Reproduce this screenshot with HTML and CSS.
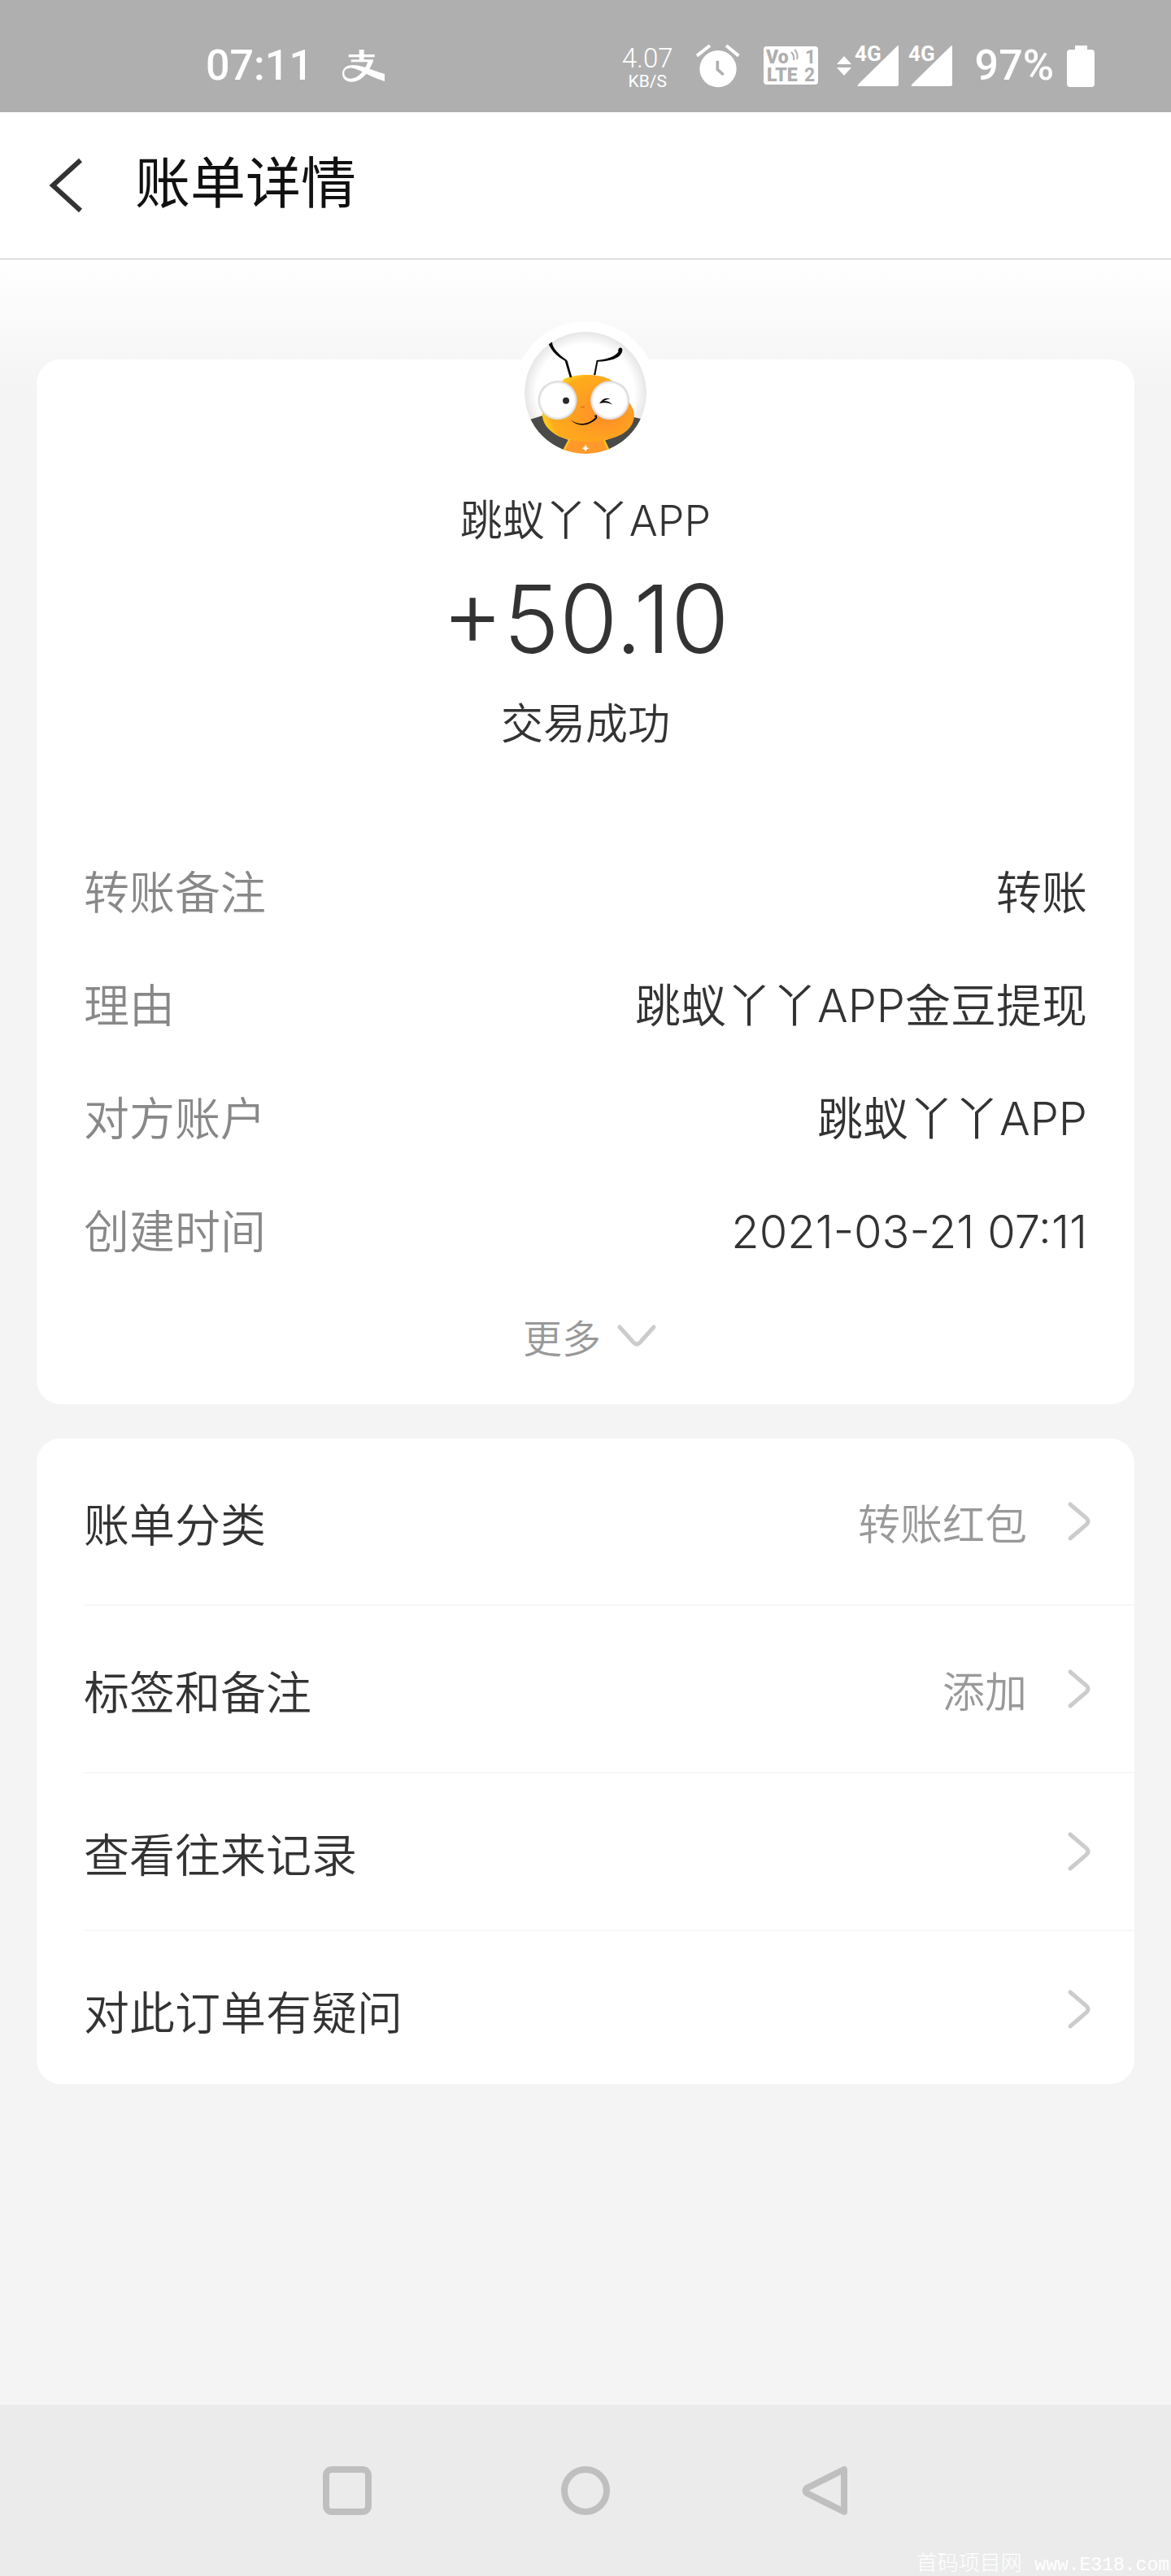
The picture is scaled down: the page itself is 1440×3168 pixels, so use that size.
FILE: index.html
```html
<!DOCTYPE html>
<html lang="zh-CN">
<head>
<meta charset="utf-8">
<meta name="viewport" content="width=device-width">
<title>账单详情</title>
<link rel="stylesheet" href="styles.css">
</head>
<body>
<div class="status-bar">
  <div class="status-left">
    <span class="status-text">07:11</span>
    <svg class="pay-icon" width="52" height="42" viewBox="598 94 156 126" aria-hidden="true">
      <g fill="#fff">
        <path d="M660 97h18v43h-18zM621 115h96v10h-96zM630 134h82v9h-82z"/>
        <path d="M694 137h18c-8 26-22 48-38 62-16 14-30 17-42 17-20 0-34-13-34-30 0-20 16-32 38-32 30 0 58 14 118 33v27c-40-13-66-26-88-38-18-8-30-12-42-11-13 1-19 9-19 19 0 12 9 20 24 20 30 0 54-34 65-67z"/>
      </g>
    </svg>
  </div>
  <div class="status-right">
    <div class="net-speed"><span class="net-value">4.07</span><span class="net-unit">KB/S</span></div>
    <svg class="alarm-icon" width="54" height="54" viewBox="346 76 162 162" aria-hidden="true">
      <circle cx="427" cy="168" r="68" fill="#fff"/>
      <path d="M349 120l48-38M457 82l46 38" stroke="#fff" stroke-width="12"/>
      <path d="M425 138v32l22 20" fill="none" stroke="#afafaf" stroke-width="11"/>
    </svg>
    <svg class="volte-icon" width="68" height="48" viewBox="0 0 68 48" aria-hidden="true">
      <rect width="67" height="47" rx="4" fill="#fff"/>
      <g class="volte-text">
        <text x="3" y="21">Vo</text><text x="4" y="43">LTE</text>
        <text class="volte-num" x="51" y="21">1</text><text class="volte-num" x="50" y="43">2</text>
      </g>
      <path d="M34 7q4 4 3 10M38 4q5 5 3 12" fill="none" stroke="#afafaf" stroke-width="2"/>
    </svg>
    <svg class="data-icon" width="18" height="24" viewBox="0 0 18 24" aria-hidden="true"><path d="M9 0l9 10H0zM0 14h18l-9 10z" fill="#fff"/></svg>
    <svg class="signal-icon" width="56" height="50" viewBox="0 0 56 50" aria-hidden="true"><path d="M54 1v47q0 2-2 2H5q-2 0-1-2L52 1q2-2 2 0z" fill="#fff"/><text x="0" y="19">4G</text></svg>
    <svg class="signal-icon" width="56" height="50" viewBox="0 0 56 50" aria-hidden="true"><path d="M54 1v47q0 2-2 2H5q-2 0-1-2L52 1q2-2 2 0z" fill="#fff"/><text x="0" y="19">4G</text></svg>
    <span class="status-text battery-level">97%</span>
    <svg class="battery-icon" width="34" height="51" viewBox="0 0 34 51" aria-hidden="true"><path d="M10 0h15v5h5q4 0 4 4v38q0 4-4 4H4q-4 0-4-4V9q0-4 4-4h6z" fill="#fff"/></svg>
  </div>
</div>

<header class="title-bar">
  <button class="back" type="button" aria-label="返回">
    <svg width="40" height="66" viewBox="0 0 40 66" aria-hidden="true"><path d="M37 2L3 33l34 31" fill="none" stroke="#333" stroke-width="6"/></svg>
  </button>
  <h1 class="title">账单详情</h1>
</header>

<main class="content">
  <section class="card bill">
    <div class="avatar">
      <svg width="150" height="150" viewBox="135 83 450 450" aria-hidden="true">
        <defs>
          <clipPath id="face"><circle cx="360" cy="308" r="225"/></clipPath>
          <radialGradient id="bg"><stop offset=".8" stop-color="#fff"/><stop offset="1" stop-color="#e6e6e6"/></radialGradient>
          <radialGradient id="eye"><stop offset=".84" stop-color="#fff"/><stop offset="1" stop-color="#d2d0ce"/></radialGradient>
          <radialGradient id="skin" cx=".68" cy=".58" r=".65"><stop offset="0" stop-color="#ff8b2b"/><stop offset=".6" stop-color="#ffa31f"/><stop offset=".9" stop-color="#ffab1c"/><stop offset="1" stop-color="#ffc81e"/></radialGradient>
        </defs>
        <g clip-path="url(#face)">
          <circle cx="360" cy="308" r="225" fill="url(#bg)"/>
          <path d="M130 415l75-24c5 60 60 80 98 92l-32 60H130zM600 412l-62-14c-8 55-60 72-110 86l30 60h142z" fill="#4a4a49"/>
          <path d="M300 482h128l28 60H268z" fill="#ff9a2a"/><path d="M300 482l-32 60M428 482l28 60" stroke="#ffc61e" stroke-width="7"/>
          <path d="M280 258c45-22 135-22 175 4 24 18 50 60 70 87 25 35 18 80-25 108-60 42-210 44-264-5-34-26-44-62-28-100z" fill="url(#skin)"/>
          <circle cx="257" cy="336" r="72" fill="url(#eye)"/><circle cx="450" cy="336" r="72" fill="url(#eye)"/>
          <circle cx="288" cy="337" r="12" fill="#292929"/>
          <path d="M224 128l13-8c-1 22 28 50 51 65l5 5 17 60-8 2-18-62c-27-14-48-34-60-62zM390 243l11-55c40-4 68-14 80-31-3-18 14-20 15-7 0 22-28 41-90 43l-9 50z" fill="#080808"/>
          <path d="M305 408c28 22 67 18 93-10l-7-4 10-5 2 13c-30 31-72 34-98 6zM411 348c10-17 24-25 40-17-10 1-18 3-23 7 14 0 24 5 31 15-12-8-26-11-48-5z" fill="#080808"/>
          <path d="M343 360l5 2 9-3" fill="none" stroke="#8b4b10" stroke-width="2"/>
          <path d="M360 498q2 13 14 15-12 2-14 15-2-13-14-15 12-2 14-15z" fill="#fff"/>
        </g>
      </svg>
    </div>
    <p class="payee">跳蚁丫丫APP</p>
    <p class="amount">+50.10</p>
    <p class="state">交易成功</p>
    <dl class="details">
      <div class="detail"><dt>转账备注</dt><dd>转账</dd></div>
      <div class="detail"><dt>理由</dt><dd>跳蚁丫丫APP金豆提现</dd></div>
      <div class="detail"><dt>对方账户</dt><dd>跳蚁丫丫APP</dd></div>
      <div class="detail"><dt>创建时间</dt><dd>2021-03-21 07:11</dd></div>
    </dl>
    <button class="more" type="button">更多
      <svg width="48" height="28" viewBox="0 0 48 28" aria-hidden="true"><path d="M3 3l17 19q4 4 8 0L45 3" fill="none" stroke="#ccc" stroke-width="5" stroke-linecap="round"/></svg>
    </button>
  </section>

  <nav class="card actions">
    <a class="action" href="#category"><span class="action-name">账单分类</span><span class="action-value">转账红包</span><svg class="chevron" width="28" height="48" viewBox="0 0 28 48" aria-hidden="true"><path d="M3 3l20 17q4 4 0 8L3 45" fill="none" stroke="#ccc" stroke-width="5" stroke-linecap="round"/></svg></a>
    <a class="action" href="#notes"><span class="action-name">标签和备注</span><span class="action-value">添加</span><svg class="chevron" width="28" height="48" viewBox="0 0 28 48" aria-hidden="true"><path d="M3 3l20 17q4 4 0 8L3 45" fill="none" stroke="#ccc" stroke-width="5" stroke-linecap="round"/></svg></a>
    <a class="action compact" href="#history"><span class="action-name">查看往来记录</span><svg class="chevron" width="28" height="48" viewBox="0 0 28 48" aria-hidden="true"><path d="M3 3l20 17q4 4 0 8L3 45" fill="none" stroke="#ccc" stroke-width="5" stroke-linecap="round"/></svg></a>
    <a class="action compact" href="#help"><span class="action-name">对此订单有疑问</span><svg class="chevron" width="28" height="48" viewBox="0 0 28 48" aria-hidden="true"><path d="M3 3l20 17q4 4 0 8L3 45" fill="none" stroke="#ccc" stroke-width="5" stroke-linecap="round"/></svg></a>
  </nav>
</main>

<footer class="system-nav">
  <button type="button" aria-label="最近任务"><svg width="60" height="62" viewBox="0 0 60 62" aria-hidden="true"><rect x="4" y="5" width="52" height="52" rx="7" fill="none" stroke="#bfbfbf" stroke-width="8"/></svg></button>
  <button type="button" aria-label="主屏幕"><svg width="60" height="62" viewBox="0 0 60 62" aria-hidden="true"><circle cx="30" cy="31" r="26" fill="none" stroke="#bfbfbf" stroke-width="8"/></svg></button>
  <button type="button" aria-label="返回上一页"><svg width="60" height="62" viewBox="0 0 60 62" aria-hidden="true"><path d="M55 5v52L9 34q-3-3 0-6z" fill="none" stroke="#bfbfbf" stroke-width="8" stroke-linejoin="round"/></svg></button>
  <p class="watermark">首码项目网 <span class="watermark-url">www.E318.com</span></p>
</footer>
</body>
</html>
```
FILE: styles.css
```css
* { box-sizing: border-box; }

body {
  margin: 0;
  min-height: 100vh;
  display: flex;
  flex-direction: column;
  background: #f4f4f4;
  color: #333;
  font-family: Inter, "Noto Sans CJK SC", sans-serif;
  font-weight: 350;
}

h1, p, dl, dd { margin: 0; }
button { padding: 0; border: 0; background: none; font: inherit; }
svg { display: block; flex: none; overflow: visible; }

/* Status bar */
.status-bar {
  display: flex;
  justify-content: space-between;
  height: 138px;
  padding: 24px 94px 0 253px;
  background: #afafaf;
  color: #fff;
  font-family: Roboto, sans-serif;
}
.status-left, .status-right { display: flex; align-items: center; }
.status-left { gap: 36px; }
.status-text { font-size: 52px; font-weight: 500; line-height: 64px; }
.net-speed { display: flex; flex-direction: column; align-items: center; margin-right: 28px; padding-top: 6px; }
.net-value { font-size: 33px; line-height: 32px; font-weight: 300; }
.net-unit { font-size: 21px; line-height: 24px; font-weight: 400; }
.alarm-icon { margin-right: 29px; }
.volte-icon { margin-right: 22px; }
.data-icon { margin-right: 4px; }
.signal-icon { margin-right: 10px; }
.signal-icon text { font: 700 26px Roboto, sans-serif; fill: #fff; }
.volte-text { font: 900 23px Roboto, sans-serif; fill: #afafaf; }
.volte-num { font-weight: 700; }
.battery-level { margin: 0 16px; }

/* Title bar */
.title-bar {
  display: flex;
  align-items: center;
  gap: 64px;
  height: 181px;
  padding: 0 62px;
  border-bottom: 1px solid #c4c4c4;
  background: #fff;
}
.title { padding-bottom: 6px; color: #111; font-size: 68px; line-height: 88px; font-weight: 400; }

/* Cards */
.content {
  flex: 1;
  padding: 123px 45px 0;
  background: linear-gradient(#fff, #f4f4f4 160px);
}
.card { border-radius: 30px; background: #fff; }
.bill { display: flex; flex-direction: column; align-items: center; padding-bottom: 48px; }
.avatar { margin-top: -47px; padding: 13px; border-radius: 50%; background: #fff; }
.payee, .state { font-size: 52px; line-height: 64px; }
.payee { margin-top: 38px; }
.amount { margin: 28px 0 38px; font-size: 116px; line-height: 120px; font-weight: 300; }
.details { align-self: stretch; margin: 106px 0 22px; padding: 0 58px; }
.detail { display: flex; justify-content: space-between; font-size: 56px; line-height: 139px; }
.detail dt { color: #888; }
.more { display: flex; align-items: center; gap: 20px; height: 72px; padding-left: 10px; color: #999; font-size: 48px; }

.actions { margin-top: 42px; padding-left: 58px; }
.action {
  display: flex;
  align-items: center;
  height: 206px;
  padding-right: 54px;
  border-bottom: 2px solid #f7f7f7;
  color: #333;
  font-size: 56px;
  text-decoration: none;
}
.action.compact { height: 194px; }
.action.compact:last-child { height: 188px; padding-top: 4px; border-bottom: 0; }
.action-name { flex: 1; }
.action-value { margin-right: 50px; color: #999; font-size: 52px; }

/* System navigation */
.system-nav {
  position: relative;
  display: flex;
  justify-content: center;
  align-items: center;
  gap: 233px;
  height: 212px;
  border-top: 1px solid #fafafa;
  background: #ebebeb;
  overflow: hidden;
}
.watermark {
  position: absolute;
  right: 2px;
  bottom: 0;
  color: #fff;
  font: 300 26px/26px "Liberation Mono", "Noto Sans CJK SC", monospace;
}
.watermark-url { font-size: 23px; }
```
